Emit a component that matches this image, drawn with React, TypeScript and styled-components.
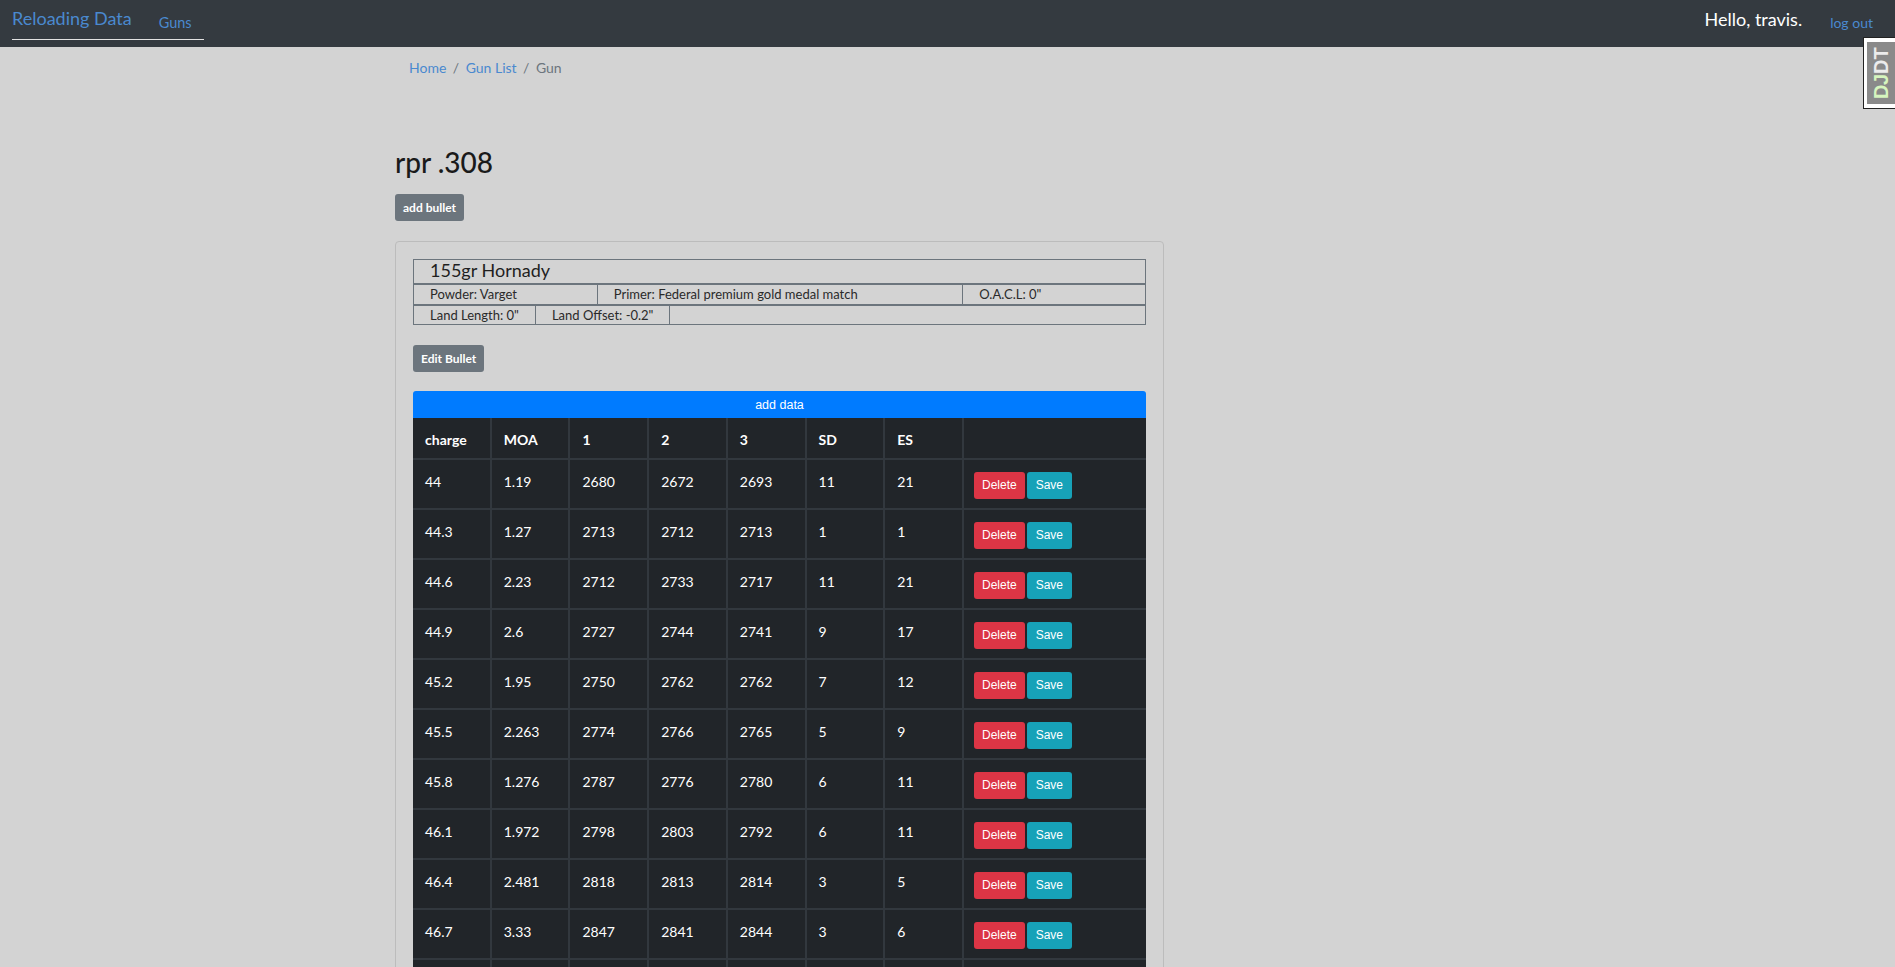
import React from "react";
import styled, { createGlobalStyle } from "styled-components";

const GlobalStyle = createGlobalStyle`
  html, body {
    margin: 0;
    padding: 0;
    background: #d3d3d3;
    overflow: hidden;
  }
  body {
    font-family: Lato, "Open Sans", "Liberation Sans", sans-serif;
    color: #212529;
  }
  * { box-sizing: border-box; }
`;

const Navbar = styled.header`
  height: 47px;
  background: #343a40;
  display: flex;
  justify-content: space-between;
  align-items: flex-start;
  padding: 0 22px 0 12px;
`;

const LeftNav = styled.nav`
  display: flex;
  align-items: flex-start;
  height: 40px;
  border-bottom: 1px solid #e2e2e2;
  padding-right: 12px;
`;

const Brand = styled.a`
  font-size: 18px;
  line-height: 18px;
  margin-top: 9px;
  color: #4a89cf;
  text-decoration: none;
`;

const NavLink = styled.a`
  font-size: 14.5px;
  line-height: 15px;
  margin-top: 15px;
  margin-left: 27px;
  color: #4a89cf;
  text-decoration: none;
`;

const RightNav = styled.div`
  display: flex;
  align-items: flex-start;
  gap: 28px;
`;

const Greeting = styled.span`
  font-size: 18px;
  line-height: 18px;
  margin-top: 10px;
  color: #ffffff;
`;

const Logout = styled.a`
  font-size: 14px;
  line-height: 14px;
  margin-top: 16px;
  color: #4a89cf;
  text-decoration: none;
`;

const DebugHandle = styled.div`
  position: fixed;
  top: 37px;
  right: 0;
  width: 32px;
  height: 72px;
  background: #ffffff;
  border: 1px solid #222;
  border-right: none;
  padding: 4px 0 4px 3px;
  display: flex;
`;

const DebugButton = styled.div`
  flex: 1;
  background: #8a8a8a;
  display: flex;
  align-items: center;
  justify-content: center;
  writing-mode: vertical-rl;
  transform: rotate(180deg);
  font-family: "Liberation Sans", Arial, sans-serif;
  font-weight: 700;
  font-size: 20px;
  line-height: 1;
`;

const DebugLetter = styled.span<{ $green?: boolean }>`
  color: ${(p) => (p.$green ? "#d6f5be" : "#ececec")};
`;

const Container = styled.main`
  width: 1105px;
  margin: 0 auto;
`;

const Breadcrumb = styled.ol`
  list-style: none;
  margin: 10px 0 0;
  padding: 0 14px;
  display: flex;
  font-size: 14px;
  line-height: 21px;
`;

const Crumb = styled.li<{ $active?: boolean }>`
  color: ${(p) => (p.$active ? "#6c757d" : "#4a89cf")};
  &:not(:first-child)::before {
    content: "/";
    color: #6c757d;
    padding: 0 6.5px;
  }
`;

const Title = styled.h2`
  margin: 67px 0 0;
  font-size: 28px;
  line-height: 34px;
  font-weight: 500;
  color: #1a1a1a;
`;

type Variant = "secondary" | "danger" | "info";

const Button = styled.button<{ $variant: Variant }>`
  height: 27px;
  border: none;
  border-radius: 3px;
  padding: 0 ${(p) => (p.$variant === "info" ? 9 : 8)}px;
  font-family: ${(p) =>
    p.$variant === "secondary"
      ? 'Lato, "Liberation Sans", sans-serif'
      : '"Liberation Sans", Arial, sans-serif'};
  font-size: 12px;
  font-weight: ${(p) => (p.$variant === "secondary" ? 700 : 400)};
  line-height: 27px;
  color: #ffffff;
  cursor: pointer;
  background: ${(p) =>
    p.$variant === "secondary" ? "#6c757d" : p.$variant === "danger" ? "#dc3545" : "#17a2b8"};
`;

const AddBullet = styled(Button)`
  display: block;
  margin-top: 15px;
`;

const Card = styled.section`
  margin-top: 20px;
  width: 769px;
  border: 1px solid #bcbcbc;
  border-radius: 4px;
  padding: 17px;
`;

const BulletBox = styled.div`
  border: 1px solid #6c757d;
`;

const BulletTitle = styled.div`
  font-size: 18px;
  line-height: 20px;
  height: 25px;
  padding: 0 16px 3px;
  color: #1f1f1f;
  border-bottom: 2px solid #6c757d;
`;

const SpecRow = styled.div`
  display: grid;
  grid-template-columns: 1fr 2fr 1fr;
  height: 21px;
  border-bottom: 2px solid #6c757d;
  font-size: 13px;
  line-height: 19px;
`;

const SpecRowAuto = styled.div`
  display: flex;
  height: 18px;
  font-size: 13px;
  line-height: 18px;
`;

const SpecCell = styled.div<{ $fill?: boolean }>`
  padding: 0 16px;
  color: #2a2a2a;
  white-space: nowrap;
  flex: ${(p) => (p.$fill ? 1 : "none")};
  & + & {
    border-left: 1px solid #6c757d;
  }
`;

const EditBullet = styled(Button)`
  display: block;
  margin-top: 20px;
`;

const AddData = styled.button`
  display: block;
  width: 100%;
  margin-top: 19px;
  height: 27px;
  border: none;
  border-radius: 3px 3px 0 0;
  background: #007bff;
  color: #fff;
  font-family: "Liberation Sans", Arial, sans-serif;
  font-size: 12.5px;
  line-height: 27px;
  cursor: pointer;
`;

const DataGrid = styled.div`
  display: grid;
  grid-template-columns: repeat(7, 1fr) 182px;
  grid-auto-rows: 48px;
  grid-template-rows: 40px;
  gap: 2px;
  background: #32383e;
`;

const HeadCell = styled.div`
  background: #212529;
  color: #ffffff;
  font-weight: 700;
  font-size: 14px;
  line-height: 21px;
  padding: 11px 12px 0;
`;

const Cell = styled.div`
  background: #212529;
  color: #ffffff;
  font-size: 14px;
  line-height: 21px;
  padding: 11px 12px 0;
`;

const ActionCell = styled.div`
  background: #212529;
  padding: 12px 10px 0;
  display: flex;
  align-items: flex-start;
  gap: 2px;
`;

const headers = ["charge", "MOA", "1", "2", "3", "SD", "ES", ""];

const rows: string[][] = [
  ["44", "1.19", "2680", "2672", "2693", "11", "21"],
  ["44.3", "1.27", "2713", "2712", "2713", "1", "1"],
  ["44.6", "2.23", "2712", "2733", "2717", "11", "21"],
  ["44.9", "2.6", "2727", "2744", "2741", "9", "17"],
  ["45.2", "1.95", "2750", "2762", "2762", "7", "12"],
  ["45.5", "2.263", "2774", "2766", "2765", "5", "9"],
  ["45.8", "1.276", "2787", "2776", "2780", "6", "11"],
  ["46.1", "1.972", "2798", "2803", "2792", "6", "11"],
  ["46.4", "2.481", "2818", "2813", "2814", "3", "5"],
  ["46.7", "3.33", "2847", "2841", "2844", "3", "6"],
];

export default function App() {
  return (
    <>
      <GlobalStyle />
      <Navbar>
        <LeftNav>
          <Brand href="#">Reloading Data</Brand>
          <NavLink href="#">Guns</NavLink>
        </LeftNav>
        <RightNav>
          <Greeting>Hello, travis.</Greeting>
          <Logout href="#">log out</Logout>
        </RightNav>
      </Navbar>
      <DebugHandle>
        <DebugButton>
          <DebugLetter $green>D</DebugLetter>
          <DebugLetter $green>J</DebugLetter>
          <DebugLetter>DT</DebugLetter>
        </DebugButton>
      </DebugHandle>
      <Container>
        <Breadcrumb>
          <Crumb>Home</Crumb>
          <Crumb>Gun List</Crumb>
          <Crumb $active>Gun</Crumb>
        </Breadcrumb>
        <Title>rpr .308</Title>
        <AddBullet $variant="secondary">add bullet</AddBullet>
        <Card>
          <BulletBox>
            <BulletTitle>155gr Hornady</BulletTitle>
            <SpecRow>
              <SpecCell>Powder: Varget</SpecCell>
              <SpecCell>Primer: Federal premium gold medal match</SpecCell>
              <SpecCell>O.A.C.L: 0"</SpecCell>
            </SpecRow>
            <SpecRowAuto>
              <SpecCell>Land Length: 0"</SpecCell>
              <SpecCell>Land Offset: -0.2"</SpecCell>
              <SpecCell $fill />
            </SpecRowAuto>
          </BulletBox>
          <EditBullet $variant="secondary">Edit Bullet</EditBullet>
          <AddData>add data</AddData>
          <DataGrid>
            {headers.map((h, i) => (
              <HeadCell key={"h" + i}>{h}</HeadCell>
            ))}
            {rows.map((r, ri) => (
              <React.Fragment key={ri}>
                {r.map((v, ci) => (
                  <Cell key={ci}>{v}</Cell>
                ))}
                <ActionCell>
                  <Button $variant="danger">Delete</Button>
                  <Button $variant="info">Save</Button>
                </ActionCell>
              </React.Fragment>
            ))}
            {Array.from({ length: 8 }).map((_, i) => (
              <Cell key={"tail" + i} />
            ))}
          </DataGrid>
        </Card>
      </Container>
    </>
  );
}
